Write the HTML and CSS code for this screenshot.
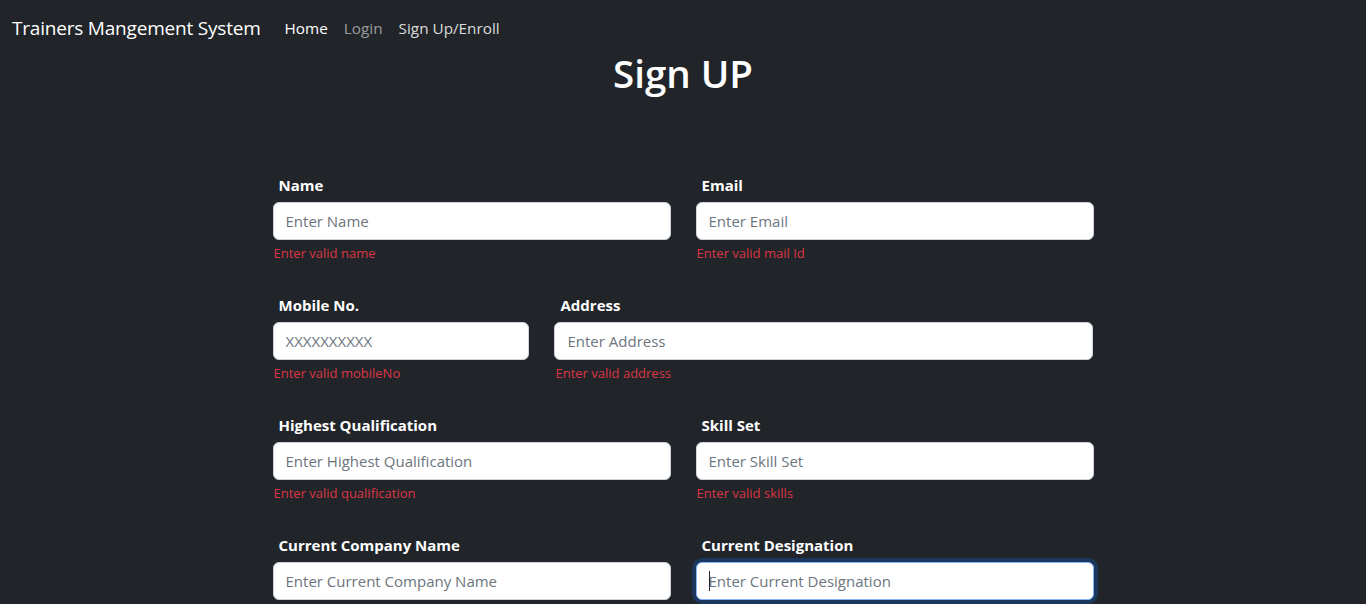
FILE: index.html
```html
<!DOCTYPE html>
<html lang="en">
<head>
<meta charset="utf-8">
<title>Trainers Mangement System</title>
<link rel="stylesheet" href="styles.css">
</head>
<body>
<nav class="navbar">
  <a class="brand" href="#">Trainers Mangement System</a>
  <ul class="nav-links">
    <li><a class="nav-link active" href="#">Home</a></li>
    <li><a class="nav-link muted" href="#">Login</a></li>
    <li><a class="nav-link" href="#">Sign Up/Enroll</a></li>
  </ul>
</nav>
<h1 class="title">Sign UP</h1>
<form class="signup">
  <div class="row">
    <div class="field col-6">
      <label class="label">Name</label>
      <input class="input" type="text" placeholder="Enter Name">
      <div class="error">Enter valid name</div>
    </div>
    <div class="field col-6">
      <label class="label">Email</label>
      <input class="input" type="text" placeholder="Enter Email">
      <div class="error">Enter valid mail Id</div>
    </div>
  </div>
  <div class="row">
    <div class="field col-4">
      <label class="label">Mobile No.</label>
      <input class="input" type="text" placeholder="XXXXXXXXXX">
      <div class="error">Enter valid mobileNo</div>
    </div>
    <div class="field col-8">
      <label class="label">Address</label>
      <input class="input" type="text" placeholder="Enter Address">
      <div class="error">Enter valid address</div>
    </div>
  </div>
  <div class="row">
    <div class="field col-6">
      <label class="label">Highest Qualification</label>
      <input class="input" type="text" placeholder="Enter Highest Qualification">
      <div class="error">Enter valid qualification</div>
    </div>
    <div class="field col-6">
      <label class="label">Skill Set</label>
      <input class="input" type="text" placeholder="Enter Skill Set">
      <div class="error">Enter valid skills</div>
    </div>
  </div>
  <div class="row">
    <div class="field col-6">
      <label class="label">Current Company Name</label>
      <input class="input" type="text" placeholder="Enter Current Company Name">
      <div class="error">Enter valid company</div>
    </div>
    <div class="field col-6">
      <label class="label">Current Designation</label>
      <div class="input-wrap">
        <input class="input focused" type="text" placeholder="Enter Current Designation">
        <span class="caret"></span>
      </div>
      <div class="error">Enter valid designation</div>
    </div>
  </div>
</form>
</body>
</html>
```
FILE: styles.css
```css
* { box-sizing: border-box; }
html, body {
  margin: 0;
  background: #212529;
  color: #dee2e6;
  font-family: "Open Sans", "Noto Sans", sans-serif;
}
.navbar {
  display: flex;
  align-items: center;
  height: 50px;
  padding: 6px 12px 0;
}
.brand {
  color: #fff;
  text-decoration: none;
  font-size: 19px;
  margin-right: 16px;
  letter-spacing: -0.2px;
}
.nav-links {
  display: flex;
  list-style: none;
  margin: 0;
  padding: 0;
}
.nav-link {
  display: block;
  padding: 8px 8px;
  font-size: 15.3px;
  color: rgba(255,255,255,0.85);
  text-decoration: none;
}
.nav-link.active { color: #fff; }
.nav-link.muted { color: rgba(255,255,255,0.55); }
.title {
  margin: -1px 0 0;
  text-align: center;
  color: #fff;
  font-size: 38.5px;
  font-weight: 600;
  line-height: 48px;
}
.signup {
  width: 846px;
  margin: 75px auto 0;
}
.row {
  display: flex;
  margin-bottom: 30px;
}
.field { padding: 0 12.5px; }
.col-6 { width: 50%; }
.col-4 { width: 33.3333%; }
.col-8 { width: 66.6667%; }
.label {
  display: block;
  padding: 1px 0 0 6px;
  font-size: 15px;
  font-weight: 700;
  color: #fff;
  line-height: 24px;
  margin-bottom: 5px;
}
.input-wrap { position: relative; }
.input {
  display: block;
  width: 100%;
  height: 38px;
  padding: 6px 12px;
  font-family: inherit;
  font-size: 15px;
  color: #212529;
  background: #fff;
  border: 1px solid #ced4da;
  border-radius: 6px;
  outline: none;
}
.input::placeholder { color: #6c757d; opacity: 1; }
.input.focused {
  border-color: #86b7fe;
  box-shadow: 0 0 0 4px rgba(13,110,253,0.25);
}
.caret {
  position: absolute;
  left: 13px;
  top: 9px;
  width: 1px;
  height: 20px;
  background: #212529;
}
.error {
  margin-top: 4px;
  padding-left: 1px;
  font-size: 13px;
  color: #dc3545;
  line-height: 18px;
}
```
